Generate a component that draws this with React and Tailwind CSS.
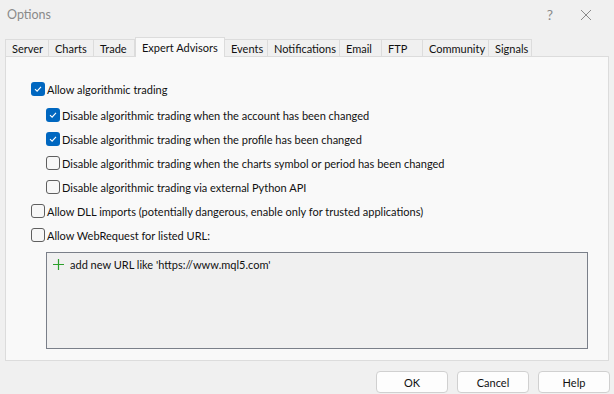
import React from "react";

const tabs = [
  { name: "Server", w: 44 },
  { name: "Charts", w: 45 },
  { name: "Trade", w: 41 },
  { name: "Expert Advisors", w: 90, active: true },
  { name: "Events", w: 43 },
  { name: "Notifications", w: 72 },
  { name: "Email", w: 42 },
  { name: "FTP", w: 41 },
  { name: "Community", w: 66 },
  { name: "Signals", w: 43 },
];

function Checkbox({ checked }) {
  if (checked) {
    return (
      <span className="flex h-[14px] w-[14px] shrink-0 items-center justify-center rounded-[3px] bg-[#0067c0]">
        <svg width="10" height="10" viewBox="0 0 10 10">
          <path d="M2 5.2 L4.1 7.2 L8 2.8" fill="none" stroke="#fff" strokeWidth="1.1" />
        </svg>
      </span>
    );
  }
  return <span className="h-[14px] w-[14px] shrink-0 rounded-[3px] border border-[#5f5f5f] bg-[#f7f7f7]" />;
}

function Row({ checked, children, indent }) {
  return (
    <div className={`flex h-[24px] items-center gap-[2px] ${indent ? "pl-[40px]" : "pl-[25px]"}`}>
      <Checkbox checked={checked} />
      <span className="whitespace-nowrap text-[#111]">{children}</span>
    </div>
  );
}

export default function App() {
  return (
    <div
      className="flex h-[394px] w-[614px] flex-col bg-[#f0f0f0] text-[11px] leading-none"
      style={{ fontFamily: '"Segoe UI", Lato, sans-serif' }}
    >
      {/* title bar */}
      <div className="flex h-[29px] items-center pl-[7px] pr-[22px] pt-[1px]">
        <span className="text-[12.5px] text-[#8a8a8a]">Options</span>
        <span className="ml-auto mr-[27px] text-[14px] text-[#8a8a8a]">?</span>
        <svg width="12" height="12" viewBox="0 0 12 12">
          <path d="M1 1 L11 11 M11 1 L1 11" stroke="#8a8a8a" strokeWidth="1" />
        </svg>
      </div>

      {/* tabs */}
      <div className="mt-[8px] flex h-[19px] items-end pl-[5px]">
        {tabs.map((t) =>
          t.active ? (
            <div
              key={t.name}
              style={{ width: t.w }}
              className="relative z-10 -mb-px flex h-[20px] items-center whitespace-nowrap border border-b-0 border-[#dcdcdc] bg-[#f9f9f9] pl-[6px] text-[#111]"
            >
              {t.name}
            </div>
          ) : (
            <div
              key={t.name}
              style={{ width: t.w }}
              className="flex h-[17px] items-center whitespace-nowrap border border-b-0 border-l-0 border-[#dcdcdc] bg-[#f0f0f0] pl-[6px] pt-[1px] text-[#111] first:border-l"
            >
              {t.name}
            </div>
          )
        )}
      </div>

      {/* panel */}
      <div className="mx-[5px] flex h-[305px] flex-col border border-[#dcdcdc] bg-[#f9f9f9] pt-[20px]">
        <Row checked>Allow algorithmic trading</Row>
        <div className="h-[2px]" />
        <Row checked indent>Disable algorithmic trading when the account has been changed</Row>
        <Row checked indent>Disable algorithmic trading when the profile has been changed</Row>
        <Row indent>Disable algorithmic trading when the charts symbol or period has been changed</Row>
        <Row indent>Disable algorithmic trading via external Python API</Row>
        <Row>Allow DLL imports (potentially dangerous, enable only for trusted applications)</Row>
        <Row>Allow WebRequest for listed URL:</Row>
        <div className="ml-[40px] mt-[5px] h-[97px] w-[542px] border border-[#7a7f89] bg-[#f0f0f0] pl-[6px] pt-[6px]">
          <div className="flex items-center gap-[6px]">
            <svg width="11" height="11" viewBox="0 0 11 11">
              <path d="M5.5 0 V11 M0 5.5 H11" stroke="#2ca02c" strokeWidth="1.2" />
            </svg>
            <span className="text-[#111]">add new URL like 'https://www.mql5.com'</span>
          </div>
        </div>
      </div>

      {/* buttons */}
      <div className="mt-[10px] flex justify-end gap-[9px] pr-[4px]">
        {["OK", "Cancel", "Help"].map((b) => (
          <button
            key={b}
            className="flex h-[22px] w-[72px] items-center justify-center rounded-[4px] border border-[#d0d0d0] bg-[#fdfdfd] text-[#111]"
          >
            {b}
          </button>
        ))}
      </div>
    </div>
  );
}
